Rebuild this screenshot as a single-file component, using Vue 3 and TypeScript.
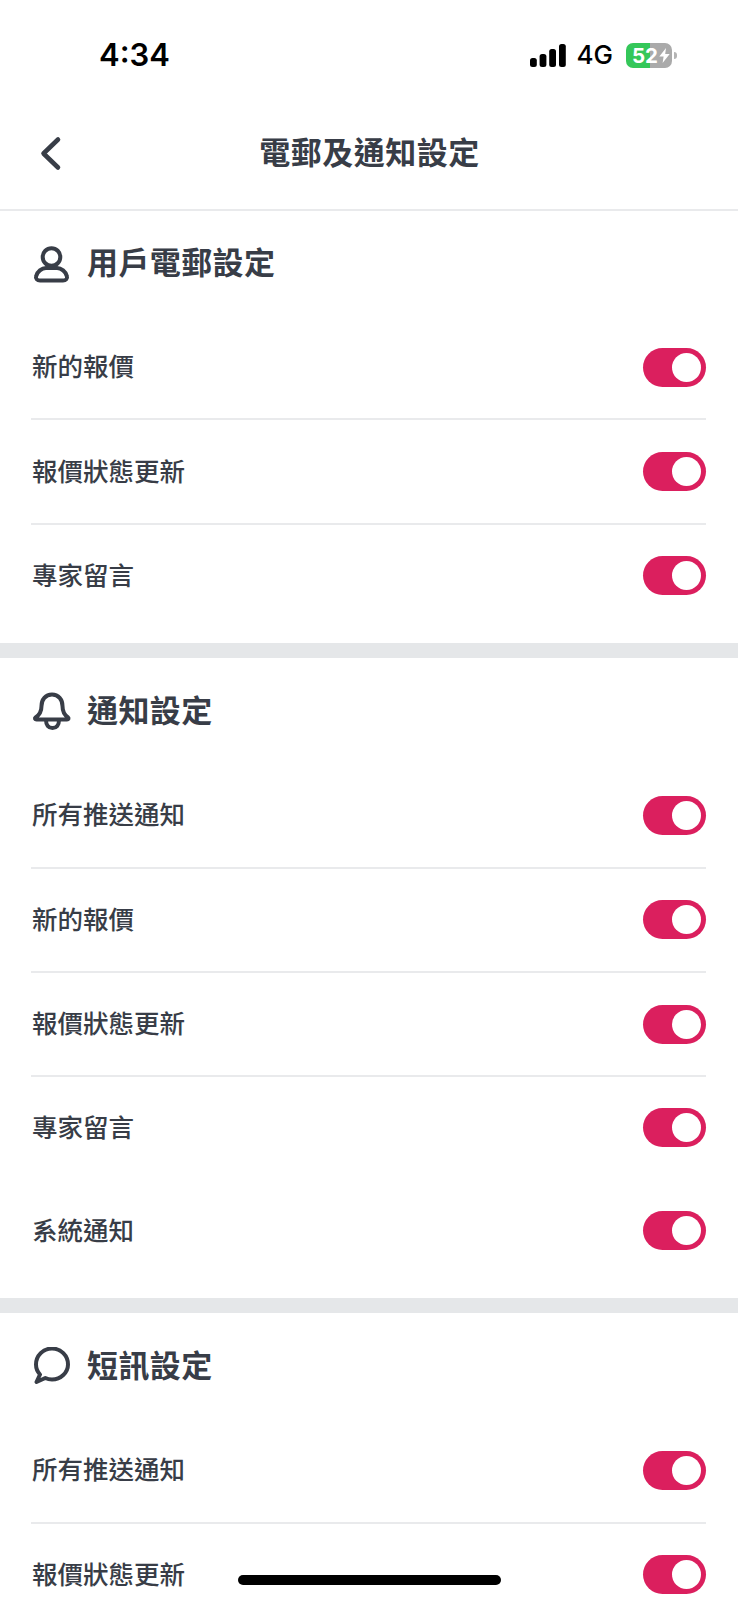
<script setup lang="ts">
interface Row {
  label: string
  line: boolean
  tight?: boolean
}
interface Section {
  icon: 'user' | 'bell' | 'chat'
  title: string
  rows: Row[]
}
const sections: Section[] = [
  {
    icon: 'user',
    title: '用戶電郵設定',
    rows: [
      { label: '新的報價', line: true },
      { label: '報價狀態更新', line: true },
      { label: '專家留言', line: false },
    ],
  },
  {
    icon: 'bell',
    title: '通知設定',
    rows: [
      { label: '所有推送通知', line: true },
      { label: '新的報價', line: true },
      { label: '報價狀態更新', line: true },
      { label: '專家留言', line: false, tight: true },
      { label: '系統通知', line: false },
    ],
  },
  {
    icon: 'chat',
    title: '短訊設定',
    rows: [
      { label: '所有推送通知', line: true },
      { label: '報價狀態更新', line: false },
    ],
  },
]
</script>

<template>
  <div class="page">
    <div class="status">
      <span class="time">4:34</span>
      <div class="status-right">
        <svg class="signal" width="36" height="23" viewBox="0 0 36 23">
          <rect x="0" y="14" width="6.8" height="9" rx="2.5" />
          <rect x="9.6" y="10" width="6.8" height="13" rx="2.5" />
          <rect x="19.2" y="5" width="6.8" height="18" rx="2.5" />
          <rect x="29" y="0" width="6.8" height="23" rx="2.5" />
        </svg>
        <span class="net">4G</span>
        <div class="battery">
          <span class="batt-num">52</span>
          <svg class="bolt" width="11" height="15" viewBox="0 0 11 15">
            <path d="M7 0 L0.3 8.6 H4.6 L3.6 15 L10.7 6 H6.2 Z" fill="#fff" />
          </svg>
        </div>
        <span class="nub"></span>
      </div>
    </div>

    <header class="nav">
      <svg class="back" width="24" height="36" viewBox="0 0 24 36">
        <path d="M20 4.5 L5.5 18.5 L20 32.5" fill="none" stroke="#383d47" stroke-width="4.6" stroke-linecap="round" stroke-linejoin="round" />
      </svg>
      <h1 class="nav-title">電郵及通知設定</h1>
    </header>

    <section v-for="s in sections" :key="s.title" class="section">
      <div class="sec-head">
        <svg class="sec-icon" width="40" height="38" viewBox="0 0 40 38" fill="none" stroke="#383d47" stroke-width="4" stroke-linecap="round" stroke-linejoin="round">
          <template v-if="s.icon === 'user'">
            <circle cx="19.5" cy="12" r="8.8" />
            <path d="M8 35.5 C5 35.5 3.5 33.5 4 31.5 C5 26.5 10 23 14 23 H25 C29 23 34 26.5 35 31.5 C35.5 33.5 34 35.5 31 35.5 Z" />
          </template>
          <template v-else-if="s.icon === 'bell'">
            <path d="M20 2.5 C13.5 2.5 9.5 7.5 9.5 14 C9.5 20 7.5 23 3.5 25.5 C2.5 26.5 3 27.5 4.5 27.5 H35 C36.5 27.5 37 26.5 36 25.5 C32.5 23 30.5 20 30.5 14 C30.5 7.5 26.5 2.5 20 2.5 Z" />
            <path d="M14 28 C14 33 16.5 36 20.5 36 C24.5 36 27 33 27 28" />
          </template>
          <template v-else>
            <path d="M8 27.5 C5.5 24.8 4 21.2 4 17.5 C4 8.7 11.2 1.5 20 1.5 C28.8 1.5 36 8.7 36 17.5 C36 25.5 28.8 32.5 20 32.5 C17.7 32.5 15.4 32 13.3 31 L4.5 35 Z" />
          </template>
        </svg>
        <h2 class="sec-title">{{ s.title }}</h2>
      </div>
      <div v-for="r in s.rows" :key="r.label" class="row" :class="{ line: r.line, tight: r.tight }">
        <span class="label">{{ r.label }}</span>
        <span class="toggle"><span class="knob"></span></span>
      </div>
    </section>

    <div class="home"></div>
  </div>
</template>

<style>
html, body { margin: 0; padding: 0; background: #fff; }
</style>

<style scoped>
.page {
  position: relative;
  width: 738px;
  height: 1600px;
  overflow: hidden;
  background: #fff;
  font-family: "Noto Sans CJK TC", "Noto Sans", sans-serif;
  color: #383d47;
}
.status {
  height: 100px;
  box-sizing: border-box;
  padding: 36px 61px 0 99px;
  display: flex;
  justify-content: space-between;
  align-items: flex-start;
}
.time {
  font: 600 31px/38px Inter, sans-serif;
  color: #000;
}
.status-right {
  display: flex;
  align-items: center;
  height: 38px;
}
.signal { fill: #000; margin-right: 11px; }
.net {
  font: 500 26px/38px Inter, sans-serif;
  color: #000;
  margin-right: 13px;
}
.battery {
  width: 46px;
  height: 25px;
  border-radius: 7px;
  background: linear-gradient(90deg, #34c759 0, #34c759 53%, #aaaaaa 53%, #aaaaaa 100%);
  display: flex;
  align-items: center;
}
.batt-num {
  font: 700 20.5px/25px Inter, sans-serif;
  color: #fff;
  margin-left: 6px;
}
.bolt { margin-left: 1px; }
.nub {
  width: 3px;
  height: 7px;
  margin-left: 2px;
  border-radius: 0 3px 3px 0;
  background: #b4b4b4;
}
.nav {
  position: relative;
  height: 111px;
  box-sizing: border-box;
  border-bottom: 2px solid #e9eaec;
  display: flex;
  align-items: center;
  justify-content: center;
  padding: 0 0 8px 1px;
}
.back {
  position: absolute;
  left: 38px;
  top: 35px;
}
.nav-title {
  margin: 0;
  font-size: 31px;
  line-height: 44px;
  font-weight: 600;
  letter-spacing: 0.5px;
}
.section {
  border-bottom: 15px solid #e5e7e9;
  padding-bottom: 14px;
}
.section:last-of-type { border-bottom: 0; }
.sec-head {
  height: 105px;
  box-sizing: border-box;
  padding: 0 0 0 32px;
  display: flex;
  align-items: center;
}
.section + .section .sec-head { height: 106px; }
.sec-icon { margin-right: 15px; flex: none; }
.sec-title {
  margin: 0 0 6px;
  font-size: 31px;
  line-height: 44px;
  font-weight: 600;
  letter-spacing: 0.4px;
}
.section + .section .sec-title { margin-bottom: 4px; }
.row {
  height: 104.4px;
  box-sizing: border-box;
  margin: 0 32px 0 31px;
  display: flex;
  align-items: center;
  justify-content: space-between;
  border-bottom: 2px solid transparent;
}
.row.tight { height: 102.4px; }
.row.line { border-bottom-color: #e9eaec; }
.label {
  font-size: 25.5px;
  line-height: 36px;
  font-weight: 500;
  padding-bottom: 4px;
  margin-left: 1px;
}
.toggle {
  width: 63px;
  height: 39px;
  border-radius: 20px;
  background: #db1f5e;
  display: flex;
  align-items: center;
  justify-content: flex-end;
  padding-right: 5.5px;
  box-sizing: border-box;
}
.knob {
  width: 29px;
  height: 29px;
  border-radius: 50%;
  background: #fff;
}
.home {
  position: absolute;
  left: 238px;
  top: 1575px;
  width: 263px;
  height: 10px;
  border-radius: 5px;
  background: #000;
}
</style>
